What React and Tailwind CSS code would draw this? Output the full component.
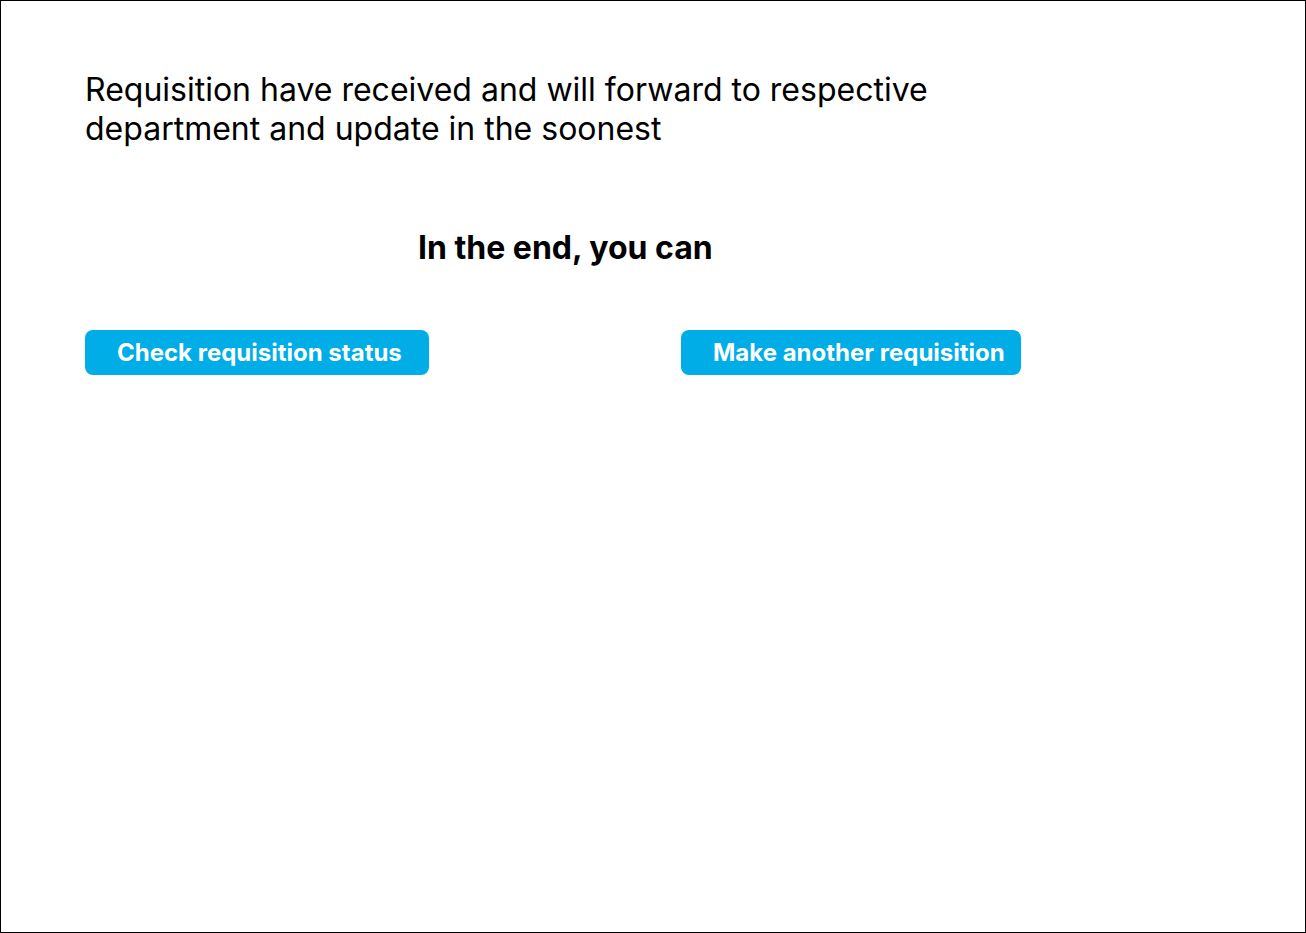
export default function App() {
  return (
    <div className="w-[1306px] h-[933px] border border-black bg-white box-border" style={{ fontFamily: "Inter, 'Noto Sans', sans-serif" }}>
      <div className="pl-[84px] pt-[69px]">
        <p className="text-[32px] leading-[39px] text-black font-normal">
          Requisition have received and will forward to respective<br />department and update in the soonest
        </p>
        <h2 className="mt-[80px] ml-[333px] text-[32px] leading-[39px] font-bold text-black">In the end, you can</h2>
        <div className="mt-[63px] flex">
          <button className="w-[344px] h-[45px] rounded-[8px] bg-[#00ADE7] text-white text-[24px] leading-[45px] font-bold text-left pl-[32px]">Check requisition status</button>
          <button className="ml-[252px] w-[340px] h-[45px] rounded-[8px] bg-[#00ADE7] text-white text-[24px] leading-[45px] font-bold text-left pl-[32px]">Make another requisition</button>
        </div>
      </div>
    </div>
  );
}
